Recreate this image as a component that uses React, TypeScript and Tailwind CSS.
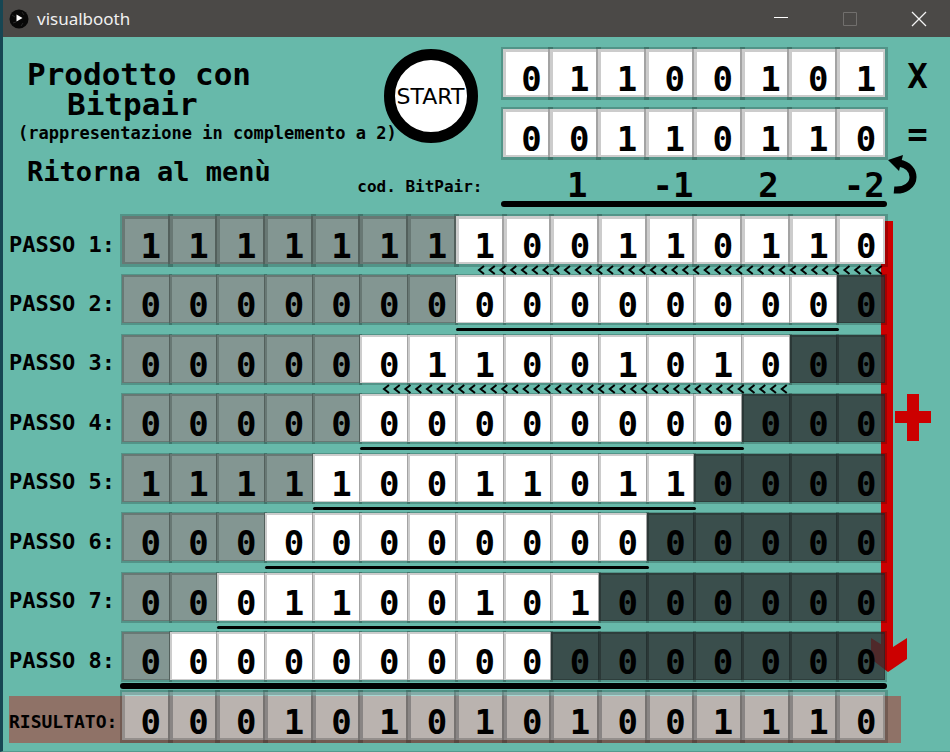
import React from 'react';

const OPERANDS = ['01100101', '00110110'];
const CODES = ['1', '-1', '2', '-2'];

type Mark = 'chevrons' | 'line' | 'total';

interface Step {
  bits: string;
  extended: number;
  padded: number;
  mark: Mark;
}

const STEPS: Step[] = [
  { bits: '1111111100110110', extended: 7, padded: 0, mark: 'chevrons' },
  { bits: '0000000000000000', extended: 7, padded: 1, mark: 'line' },
  { bits: '0000001100101000', extended: 5, padded: 2, mark: 'chevrons' },
  { bits: '0000000000000000', extended: 5, padded: 3, mark: 'line' },
  { bits: '1111100110110000', extended: 4, padded: 4, mark: 'line' },
  { bits: '0000000000000000', extended: 3, padded: 5, mark: 'line' },
  { bits: '0001100101000000', extended: 2, padded: 6, mark: 'line' },
  { bits: '0000000000000000', extended: 1, padded: 7, mark: 'total' },
];

const RESULT = '0001010101001110';

const FILLS = {
  plain: 'bg-white',
  extended: 'bg-[#839692]',
  padded: 'bg-[#303334]/80',
  result: 'bg-[#e6f4f8]/50',
};

const THICK =
  'before:absolute before:-top-[2px] before:-left-[2px] before:-right-[3px] before:-bottom-[3px] before:border-[5px] before:border-black/20';
const THIN =
  'before:absolute before:-top-px before:-left-px before:-right-[2px] before:-bottom-[2px] before:border-[3px] before:border-black/20';

const CELL =
  'relative flex h-12 items-center justify-center pt-3 pl-[10px] text-[34px] leading-none before:pointer-events-none';

function Bit({ value, fill, thick }: { value: string; fill: keyof typeof FILLS; thick: boolean }) {
  return <span className={`${CELL} ${FILLS[fill]} ${thick ? THICK : THIN}`}>{value}</span>;
}

function Chevrons() {
  return (
    <svg width="408" height="10" viewBox="0 0 408 10" className="relative mt-px" aria-hidden="true">
      {Array.from({ length: 38 }, (_, i) => (
        <path key={i} d={`M${(i * 10.75 + 7).toFixed(2)} 1l-5 4l5 4`} fill="none" stroke="#000" strokeWidth="2" />
      ))}
    </svg>
  );
}

function Underline({ step }: { step: Step }) {
  const span = { gridColumn: `${step.extended + 1} / ${17 - step.padded}` };
  if (step.mark === 'chevrons') {
    return (
      <div style={span} className="flex h-[11px] justify-end">
        <Chevrons />
      </div>
    );
  }
  if (step.mark === 'total') {
    return <div className="relative col-span-16 -mx-[2px] mt-[3px] h-[6px] rounded-full bg-black" />;
  }
  return <div style={span} className="-mr-[2px] mt-[5px] h-[3px] rounded-full bg-black" />;
}

function StepRow({ step, index }: { step: Step; index: number }) {
  return (
    <li className="grid grid-cols-[113px_1fr_65px]">
      <span className="flex h-12 items-center pt-[9px] text-[22px] leading-none whitespace-nowrap">PASSO {index + 1}:</span>
      <div className="grid grid-cols-16 content-start">
        {step.bits.split('').map((bit, i) => (
          <Bit
            key={i}
            value={bit}
            thick={index === 0}
            fill={i < step.extended ? 'extended' : i >= 16 - step.padded ? 'padded' : 'plain'}
          />
        ))}
        <Underline step={step} />
      </div>
    </li>
  );
}

function TitleBar() {
  return (
    <header className="flex h-[37px] items-center bg-[#4b4947] pl-[6px] text-[#f0f0f0]">
      <svg width="20" height="20" viewBox="0 0 20 20" aria-hidden="true">
        <circle cx="10" cy="10" r="9.5" fill="#080808" />
        <path d="M3 6l3 2M4 14l3-1M12 17l2-3M13 3l2 3" stroke="#292929" />
        <path d="M7.5 5.5v7l6-3.5z" fill="#fff" />
      </svg>
      <h1 className="ml-2 flex-1 font-['Noto_Sans',sans-serif] text-[17px] leading-none font-normal">visualbooth</h1>
      <button aria-label="Riduci" className="flex w-[69px] items-center justify-center">
        <svg width="16" height="16" viewBox="0 0 16 16"><path d="M1 6.5h14" stroke="#fff" /></svg>
      </button>
      <button aria-label="Ingrandisci" className="flex w-[69px] items-center justify-center">
        <svg width="16" height="16" viewBox="0 0 16 16"><path d="M1.500 1.500h13v13h-13z" fill="none" stroke="#716f6d" /></svg>
      </button>
      <button aria-label="Chiudi" className="mr-[-3px] flex w-[69px] items-center justify-center">
        <svg width="16" height="16" viewBox="0 0 16 16"><path d="M1 1l14 14M15 1L1 15" stroke="#f4f4f4" strokeWidth="1.300" /></svg>
      </button>
    </header>
  );
}

function Intro() {
  return (
    <div className="flex flex-col">
      <div className="flex h-[108px]">
        <div className="min-w-0 flex-1 whitespace-nowrap">
          <h2 className="pt-[10px] pl-[15px] text-[31px] leading-[30px] font-bold">
            Prodotto con
            <span className="block pl-[40px]">Bitpair</span>
          </h2>
          <p className="pl-[6px] text-[17px] leading-7">(rappresentazione in complemento a 2)</p>
        </div>
        <button className="mr-[25px] flex size-[94px] shrink-0 items-center justify-center rounded-full border-[11px] border-black bg-white font-['DejaVu_Sans',sans-serif] text-[22px] font-normal">
          START
        </button>
      </div>
      <div className="flex items-start justify-between">
        <button className="pl-[15px] text-[27px] leading-[30px]">Ritorna al menù</button>
        <span className="mr-5 pt-5 text-[16px] leading-5">cod. BitPair:</span>
      </div>
    </div>
  );
}

function Operands() {
  return (
    <div>
      <div className="flex flex-col gap-3">
        {OPERANDS.map((bits, row) => (
          <div key={row} className="grid grid-cols-8">
            {bits.split('').map((bit, i) => (
              <button key={i} className={`${CELL} ${THICK} bg-white`}>
                {bit}
              </button>
            ))}
          </div>
        ))}
      </div>
      <div className="grid h-[44px] grid-cols-4 pt-2 text-[34px] leading-10">
        {CODES.map((code, i) => (
          <span key={i} className="pl-[54px] text-center whitespace-nowrap">{code}</span>
        ))}
      </div>
      <div className="-mx-[2px] h-[6px] rounded-full bg-black" />
    </div>
  );
}

function Operators() {
  return (
    <div className="text-[34px]">
      <div className="flex h-12 items-center justify-center pt-[6px] leading-none">X</div>
      <div className="mt-3 flex h-12 items-center justify-center pt-[2px] leading-none">=</div>
      <svg className="-mt-[3px] ml-[2px] block" width="34" height="42" viewBox="0 0 34 42" aria-hidden="true">
        <path d="M12 9C22 11 26 17 26 23C26 31 18 37 7 36" fill="none" stroke="#000" strokeWidth="7" />
        <path d="M1 6L16 1L12 17Z" />
      </svg>
    </div>
  );
}

function SumArrow() {
  return (
    <div className="absolute top-[5px] right-[43px] bottom-[79px] flex w-9 flex-col" aria-hidden="true">
      <div className="ml-[10px] w-3 flex-1 bg-[#cc0000]" />
      <svg className="-mt-[22px]" width="36" height="34" viewBox="0 0 36 34">
        <path d="M0 0L16 10L22 9L36 0V21L17 34L0 21Z" fill="#cc0000" />
      </svg>
    </div>
  );
}

export default function App() {
  return (
    <div className="flex min-h-screen flex-col border-b border-l-[3px] border-b-[#569a8e] border-l-[#174653] bg-[#67b9aa] font-['DejaVu_Sans_Mono','Liberation_Mono',monospace] font-bold text-black">
      <TitleBar />
      <section className="grid h-[179px] grid-cols-[117px_1fr_1fr_65px] pt-3">
        <div className="col-span-2 pl-[9px]">
          <Intro />
        </div>
        <Operands />
        <Operators />
      </section>
      <main className="relative isolate flex flex-1 flex-col">
        <SumArrow />
        <svg className="absolute top-[178px] right-[19px]" width="36" height="47" viewBox="0 0 36 47" aria-hidden="true">
          <path d="M12 0h12v17h12v12h-12v18h-12v-18h-12v-12h12z" fill="#cc0000" />
        </svg>
        <ol className="relative grid flex-1 auto-rows-fr pl-[6px]">
          {STEPS.map((step, i) => (
            <StepRow key={i} step={step} index={i} />
          ))}
          <li className="relative grid grid-cols-[113px_1fr_65px]">
            <div className="absolute top-1 right-[49px] left-0 h-[47px] bg-[#8f7267]" />
            <span className="relative flex h-12 items-center pt-3 text-[18px] leading-none">RISULTATO:</span>
            <div className="grid grid-cols-16 content-start">
              {RESULT.split('').map((bit, i) => (
                <Bit key={i} value={bit} fill="result" thick />
              ))}
            </div>
          </li>
        </ol>
      </main>
    </div>
  );
}
